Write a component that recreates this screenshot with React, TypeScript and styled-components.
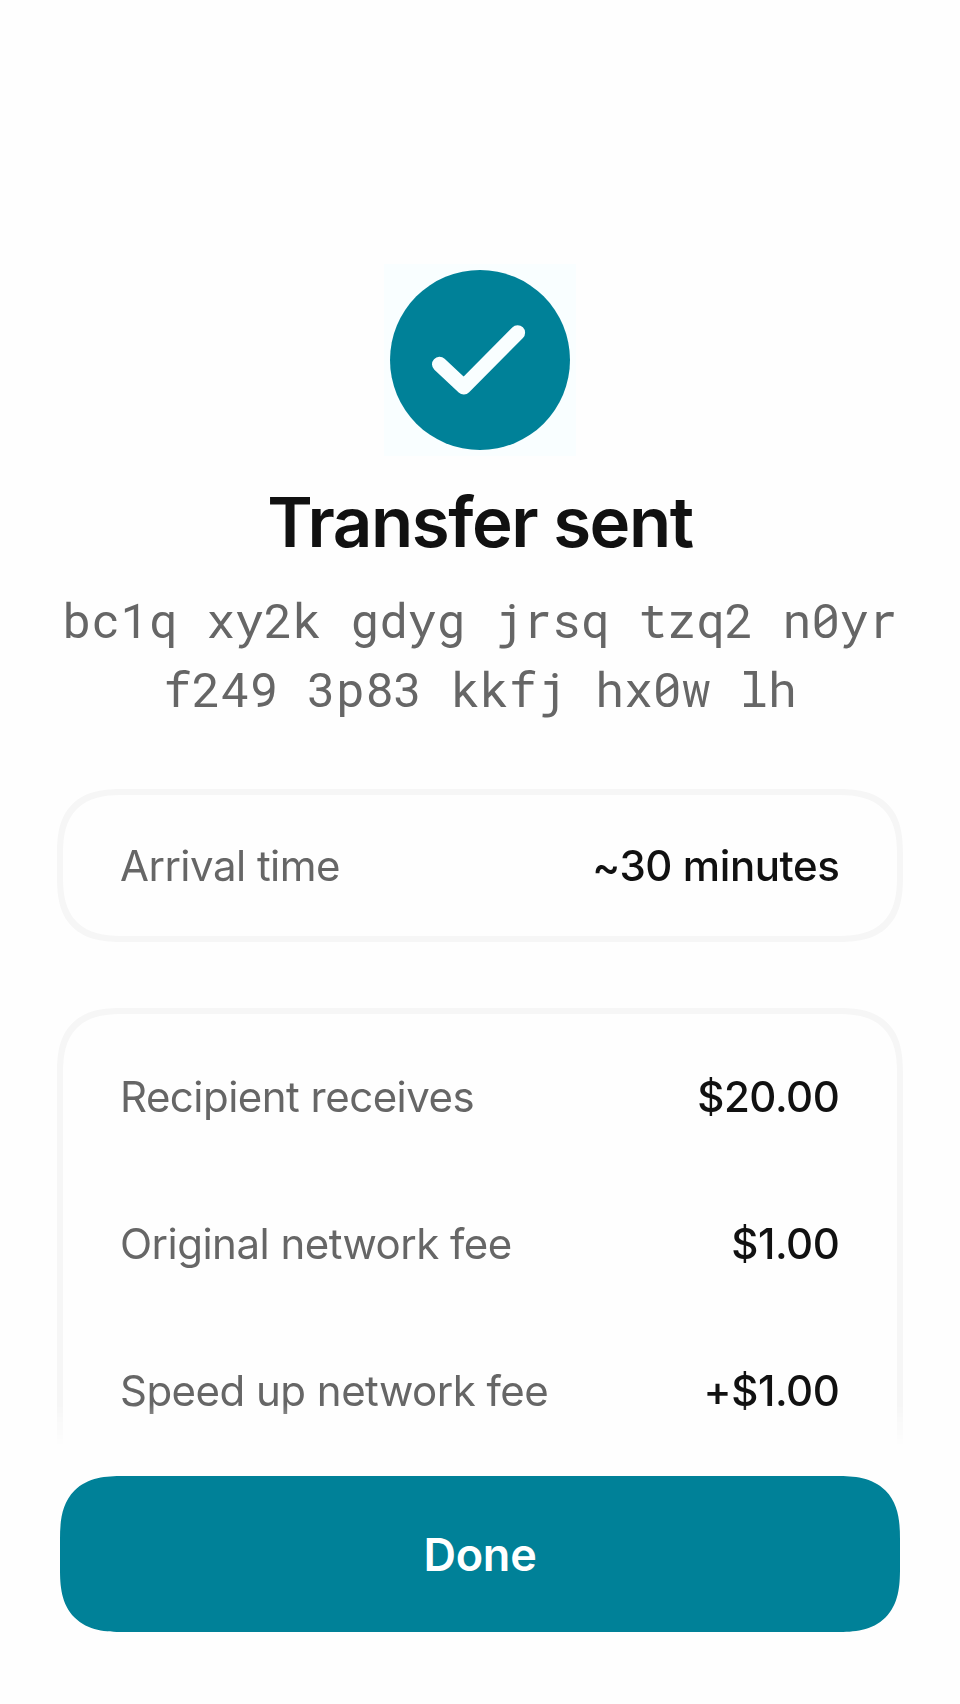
import React from "react";
import styled, { createGlobalStyle } from "styled-components";

const GlobalStyle = createGlobalStyle`
  * { box-sizing: border-box; }
  body { margin: 0; background: #fefefe; font-family: Inter, sans-serif; }
`;

const Screen = styled.main`
  width: 960px;
  height: 1704px;
  display: flex;
  flex-direction: column;
  overflow: hidden;
  background: #fefefe;
  color: #111;
`;

const Content = styled.section`
  height: 1446px;
  flex: none;
  overflow: hidden;
  display: flex;
  flex-direction: column;
  align-items: center;
  padding: 264px 57px 0;
  mask-image: linear-gradient(#000 1404px, rgba(0, 0, 0, 0.85) 1412px, transparent 1446px);
`;

const StatusIcon = styled.div`
  width: 192px;
  height: 192px;
  flex: none;
  display: flex;
  background: #f9feff;
`;

const Title = styled.h1`
  margin: 24px 0 0;
  flex: none;
  font-size: 69px;
  line-height: 84px;
  font-weight: 600;
  letter-spacing: -1.45px;
  white-space: nowrap;
`;

const Address = styled.p`
  margin: 21px 0 0;
  flex: none;
  text-align: center;
  font-family: "Roboto Mono", "DejaVu Sans Mono", monospace;
  font-size: 48px;
  line-height: 69px;
  color: #666;
  white-space: nowrap;
`;

const Card = styled.div<{ $height: number; $gap: number; $pad: number }>`
  width: 846px;
  height: ${(p) => p.$height}px;
  flex: none;
  margin-top: ${(p) => p.$gap}px;
  padding: ${(p) => p.$pad}px 57px 0;
  border: 6px solid #f6f6f6;
  border-radius: 53px;

  @supports (corner-shape: superellipse(1.4)) {
    border-radius: 66px;
    corner-shape: superellipse(1.4);
  }
`;

const Row = styled.div<{ $height?: number }>`
  height: ${(p) => p.$height ?? 147}px;
  display: flex;
  align-items: center;
  justify-content: space-between;
  font-size: 42px;
`;

const Label = styled.span`
  color: #666;
  letter-spacing: -0.52px;
`;

const Value = styled.span`
  font-weight: 500;
  letter-spacing: -0.42px;
  padding-right: 0.5px;
`;

const Footer = styled.footer`
  flex: none;
  padding: 30px 60px 0;
`;

const DoneButton = styled.button`
  width: 840px;
  height: 156px;
  border: 0;
  border-radius: 50px;
  background: #008198;
  color: #fff;
  font: 600 45px Inter, sans-serif;
  letter-spacing: -0.2px;

  @supports (corner-shape: superellipse(1.4)) {
    border-radius: 63px;
    corner-shape: superellipse(1.4);
  }
`;

export default function App() {
  return (
    <>
      <GlobalStyle />
      <Screen>
        <Content>
          <StatusIcon>
            <svg width="192" height="192" viewBox="0 0 192 192" fill="none">
              <circle cx="96" cy="96" r="90" fill="#008198" />
              <path d="M55.5 100.3 L79.8 123 L133.6 68.7" stroke="#f9feff" strokeWidth="15" strokeLinecap="round" strokeLinejoin="round" />
            </svg>
          </StatusIcon>
          <Title>Transfer sent</Title>
          <Address>
            bc1q xy2k gdyg jrsq tzq2 n0yr
            <br />
            f249 3p83 kkfj hx0w lh
          </Address>
          <Card $height={153} $gap={66} $pad={0}>
            <Row $height={141}>
              <Label>Arrival time</Label>
              <Value>~30 minutes</Value>
            </Row>
          </Card>
          <Card $height={600} $gap={66} $pad={9}>
            <Row>
              <Label>Recipient receives</Label>
              <Value>$20.00</Value>
            </Row>
            <Row>
              <Label>Original network fee</Label>
              <Value>$1.00</Value>
            </Row>
            <Row>
              <Label>Speed up network fee</Label>
              <Value>+$1.00</Value>
            </Row>
          </Card>
        </Content>
        <Footer>
          <DoneButton>Done</DoneButton>
        </Footer>
      </Screen>
    </>
  );
}
